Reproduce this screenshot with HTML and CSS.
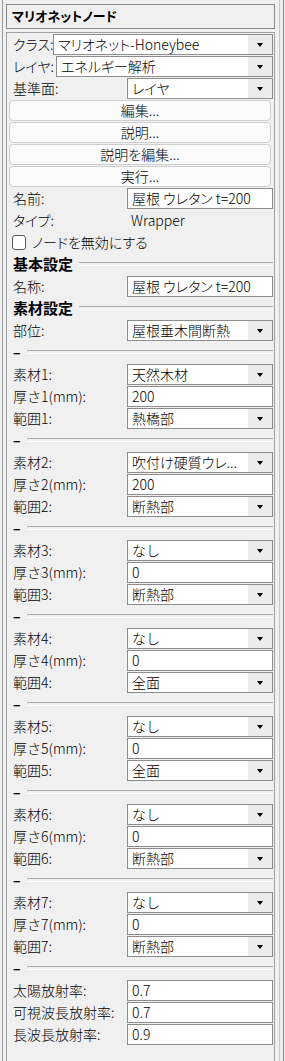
FILE: index.html
```html
<!DOCTYPE html>
<html lang="ja">
<head>
  <meta charset="UTF-8" />
  <title>マリオネットノード</title>
  <link rel="stylesheet" href="styles.css">
</head>
<body>
  <div class="frame">
    <div class="title">マリオネットノード</div>

    <div class="panel">
      <div class="row class-row">
        <label class="kana">クラス:</label>
        <div class="select"><span class="val kana">マリオネット-Honeybee</span><span class="arrow"></span></div>
      </div>
      <div class="row layer-row">
        <label class="kana">レイヤ:</label>
        <div class="select"><span class="val kana">エネルギー解析</span><span class="arrow"></span></div>
      </div>
      <div class="row">
        <label>基準面:</label>
        <div class="select"><span class="val kana">レイヤ</span><span class="arrow"></span></div>
      </div>

      <div class="row btn-row"><button class="btn">編集...</button></div>
      <div class="row btn-row"><button class="btn">説明...</button></div>
      <div class="row btn-row"><button class="btn">説明を編集...</button></div>
      <div class="row btn-row"><button class="btn">実行...</button></div>

      <div class="row">
        <label>名前:</label>
        <div class="input kana">屋根 ウレタン t=200</div>
      </div>
      <div class="row">
        <label class="kana">タイプ:</label>
        <div class="plain">Wrapper</div>
      </div>
      <div class="row check-row">
        <span class="box"></span>
        <span class="kana">ノードを無効にする</span>
      </div>

      <div class="row sect"><span>基本設定</span></div>
      <div class="row">
        <label>名称:</label>
        <div class="input kana">屋根 ウレタン t=200</div>
      </div>

      <div class="row sect"><span>素材設定</span></div>
      <div class="row">
        <label>部位:</label>
        <div class="select"><span class="val">屋根垂木間断熱</span><span class="arrow"></span></div>
      </div>

      <div class="row sep"><span>–</span></div>
      <div class="row"><label>素材1:</label><div class="select"><span class="val">天然木材</span><span class="arrow"></span></div></div>
      <div class="row"><label>厚さ1(mm):</label><div class="input">200</div></div>
      <div class="row"><label>範囲1:</label><div class="select"><span class="val">熱橋部</span><span class="arrow"></span></div></div>

      <div class="row sep"><span>–</span></div>
      <div class="row"><label>素材2:</label><div class="select"><span class="val kana">吹付け硬質ウレ...</span><span class="arrow"></span></div></div>
      <div class="row"><label>厚さ2(mm):</label><div class="input">200</div></div>
      <div class="row"><label>範囲2:</label><div class="select"><span class="val">断熱部</span><span class="arrow"></span></div></div>

      <div class="row sep"><span>–</span></div>
      <div class="row"><label>素材3:</label><div class="select"><span class="val">なし</span><span class="arrow"></span></div></div>
      <div class="row"><label>厚さ3(mm):</label><div class="input">0</div></div>
      <div class="row"><label>範囲3:</label><div class="select"><span class="val">断熱部</span><span class="arrow"></span></div></div>

      <div class="row sep"><span>–</span></div>
      <div class="row"><label>素材4:</label><div class="select"><span class="val">なし</span><span class="arrow"></span></div></div>
      <div class="row"><label>厚さ4(mm):</label><div class="input">0</div></div>
      <div class="row"><label>範囲4:</label><div class="select"><span class="val">全面</span><span class="arrow"></span></div></div>

      <div class="row sep"><span>–</span></div>
      <div class="row"><label>素材5:</label><div class="select"><span class="val">なし</span><span class="arrow"></span></div></div>
      <div class="row"><label>厚さ5(mm):</label><div class="input">0</div></div>
      <div class="row"><label>範囲5:</label><div class="select"><span class="val">全面</span><span class="arrow"></span></div></div>

      <div class="row sep"><span>–</span></div>
      <div class="row"><label>素材6:</label><div class="select"><span class="val">なし</span><span class="arrow"></span></div></div>
      <div class="row"><label>厚さ6(mm):</label><div class="input">0</div></div>
      <div class="row"><label>範囲6:</label><div class="select"><span class="val">断熱部</span><span class="arrow"></span></div></div>

      <div class="row sep"><span>–</span></div>
      <div class="row"><label>素材7:</label><div class="select"><span class="val">なし</span><span class="arrow"></span></div></div>
      <div class="row"><label>厚さ7(mm):</label><div class="input">0</div></div>
      <div class="row"><label>範囲7:</label><div class="select"><span class="val">断熱部</span><span class="arrow"></span></div></div>

      <div class="row sep"><span>–</span></div>
      <div class="row"><label>太陽放射率:</label><div class="input">0.7</div></div>
      <div class="row"><label>可視波長放射率:</label><div class="input">0.7</div></div>
      <div class="row"><label>長波長放射率:</label><div class="input">0.9</div></div>
    </div>
  </div>
  <div class="edge"></div>
</body>
</html>
```

FILE: styles.css
```css
* {
  box-sizing: border-box;
}

body {
  margin: 0;
  height: 1061px;
  overflow: hidden;
  display: flex;
  background-color: #f0f0f0;
  font-family: "Noto Sans CJK JP", "Noto Sans", sans-serif;
  font-size: 14px;
  font-weight: 300;
  color: #000;
}

.frame {
  margin-left: 2px;
  width: 278px;
  height: 1061px;
  padding: 4px 0 0 3px;
  border-left: 1px solid #9a9a9a;
  border-right: 1px solid #c8c8c8;
}

.edge {
  margin-left: 3px;
  width: 1px;
  height: 1061px;
  background-color: #8a8a8a;
}

.kana {
  font-feature-settings: "palt";
}

.title {
  width: 269px;
  height: 25px;
  padding-left: 5px;
  border: 1px solid #8a8a8a;
  font-size: 13px;
  font-weight: bold;
  line-height: 22px;
  font-feature-settings: "palt";
}

.panel {
  margin-top: 3px;
  width: 269px;
  height: 1040px;
  padding-right: 1px;
  border: 1px solid #a0a0a0;
  border-bottom: none;
}

.row {
  display: grid;
  grid-template-columns: 120px 1fr;
  align-items: center;
  height: 22px;
  line-height: 22px;
  white-space: nowrap;
}

.row label {
  padding-left: 6px;
}

.class-row {
  grid-template-columns: 46px 1fr;
}

.layer-row {
  grid-template-columns: 49px 1fr;
}

.select,
.input {
  align-self: end;
  height: 21px;
  border: 1px solid #8d8d8d;
  background-color: #fff;
  line-height: 19px;
  overflow: hidden;
}

.select {
  display: flex;
}

.select .val {
  flex: 1;
  padding-left: 4px;
  overflow: hidden;
}

.select .arrow {
  width: 24px;
  display: flex;
  align-items: center;
  justify-content: center;
  background-color: #ececec;
}

.select .arrow::after {
  content: "";
  border-left: 3px solid transparent;
  border-right: 3px solid transparent;
  border-top: 4px solid #000;
}

.input {
  padding-left: 4px;
}

.plain {
  padding-left: 4px;
}

.btn-row {
  display: flex;
  align-items: flex-end;
}

.btn {
  width: 262px;
  height: 21px;
  margin-left: 2px;
  padding: 0;
  border: 1px solid #cfcfcf;
  border-radius: 4px;
  background-color: #fbfbfb;
  font-family: inherit;
  font-size: 14px;
  font-weight: 300;
  line-height: 19px;
  color: #000;
  font-feature-settings: "palt";
}

.check-row {
  display: flex;
  align-items: center;
  gap: 6px;
  padding-left: 5px;
}

.box {
  width: 14px;
  height: 15px;
  border: 1px solid #5a5a5a;
  border-radius: 3px;
  background-color: #fff;
}

.sect,
.sep {
  display: flex;
  align-items: center;
  padding-left: 6px;
}

.sect span {
  font-size: 15px;
  font-weight: bold;
}

.sect::after,
.sep::after {
  content: "";
  flex: 1;
  height: 2px;
  margin-left: 6px;
  border-top: 1px solid #a8a8a8;
  border-bottom: 1px solid #fff;
}

.sep span {
  font-weight: bold;
  width: 6px;
}

.sep::after {
  margin-left: 8px;
}
```
